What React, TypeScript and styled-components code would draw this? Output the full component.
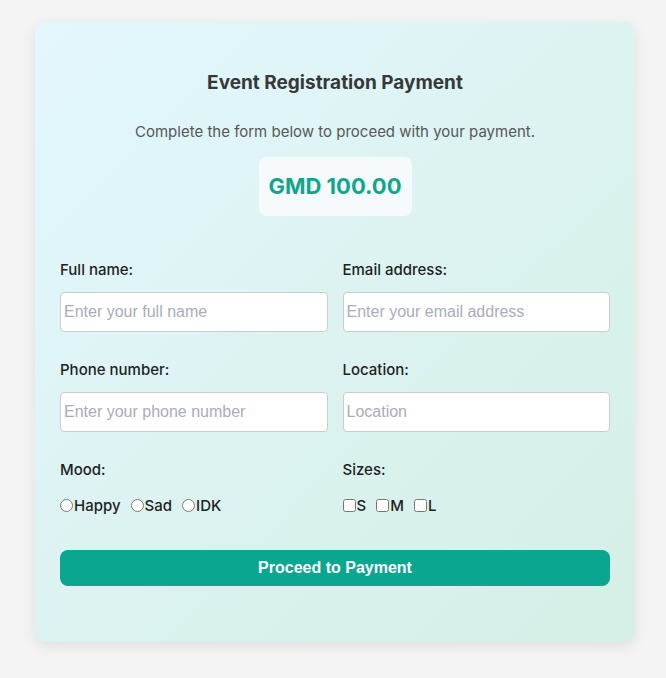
import styled, { createGlobalStyle } from "styled-components";

const GlobalStyle = createGlobalStyle`
  html, body {
    margin: 0;
    padding: 0;
    background: #f4f4f4;
    font-family: Inter, "Noto Sans", sans-serif;
  }
  * {
    box-sizing: border-box;
  }
`;

const Page = styled.div`
  padding: 22px 0 37px 35px;
`;

const Card = styled.div`
  width: 600px;
  padding: 49px 25px 56px;
  border-radius: 10px;
  background: linear-gradient(135deg, #e3f7fd 0%, #d5efe6 100%);
  box-shadow: 0 4px 14px rgba(0, 0, 0, 0.09);
  display: flex;
  flex-direction: column;
  align-items: center;
`;

const Title = styled.h2`
  margin: 0;
  font-size: 19px;
  line-height: 24px;
  font-weight: 700;
  color: #383838;
`;

const Subtitle = styled.p`
  margin: 27px 0 0;
  font-size: 15px;
  line-height: 20px;
  color: #575757;
`;

const Amount = styled.div`
  margin-top: 15px;
  padding: 15px 10px;
  border-radius: 8px;
  background: #f7fafc;
  font-size: 22px;
  line-height: 29px;
  font-weight: 700;
  color: #0fa68b;
`;

const Form = styled.form`
  width: 100%;
  margin-top: 44px;
  display: grid;
  grid-template-columns: 1fr 1fr;
  column-gap: 15px;
  row-gap: 28px;
`;

const Field = styled.div`
  display: flex;
  flex-direction: column;
`;

const Label = styled.label`
  font-size: 15px;
  line-height: 20px;
  font-weight: 500;
  color: #1f1f1f;
  margin-bottom: 12px;
`;

const Input = styled.input`
  height: 40px;
  width: 100%;
  padding: 0 3px;
  border: 1px solid #cbcbcb;
  border-radius: 4px;
  background: #fff;
  font-family: "Liberation Sans", Arial, sans-serif;
  font-size: 16px;
  color: #222;
  outline: none;

  &::placeholder {
    color: #a8adb8;
  }
`;

const Options = styled.div`
  display: flex;
  align-items: center;
  margin-top: 3px;
  height: 20px;
`;

const Option = styled.label`
  display: flex;
  align-items: center;
  margin-right: 10px;
  font-size: 15px;
  font-weight: 500;
  color: #1f1f1f;

  input {
    margin: 0 1px 0 0;
    width: 13px;
    height: 13px;
  }
`;

const SubmitButton = styled.button`
  grid-column: 1 / span 2;
  margin-top: 7px;
  height: 36px;
  border: none;
  border-radius: 8px;
  background: #0aa68f;
  color: #fff;
  font-family: "Liberation Sans", Arial, sans-serif;
  font-size: 16px;
  font-weight: 700;
  cursor: pointer;
`;

const moods = ["Happy", "Sad", "IDK"];
const sizes = ["S", "M", "L"];

export default function App() {
  return (
    <>
      <GlobalStyle />
      <Page>
        <Card>
          <Title>Event Registration Payment</Title>
          <Subtitle>Complete the form below to proceed with your payment.</Subtitle>
          <Amount>GMD 100.00</Amount>
          <Form onSubmit={(e) => e.preventDefault()}>
            <Field>
              <Label>Full name:</Label>
              <Input placeholder="Enter your full name" />
            </Field>
            <Field>
              <Label>Email address:</Label>
              <Input placeholder="Enter your email address" />
            </Field>
            <Field>
              <Label>Phone number:</Label>
              <Input placeholder="Enter your phone number" />
            </Field>
            <Field>
              <Label>Location:</Label>
              <Input placeholder="Location" />
            </Field>
            <Field>
              <Label>Mood:</Label>
              <Options>
                {moods.map((m) => (
                  <Option key={m}>
                    <input type="radio" name="mood" />
                    {m}
                  </Option>
                ))}
              </Options>
            </Field>
            <Field>
              <Label>Sizes:</Label>
              <Options>
                {sizes.map((s) => (
                  <Option key={s}>
                    <input type="checkbox" />
                    {s}
                  </Option>
                ))}
              </Options>
            </Field>
            <SubmitButton type="submit">Proceed to Payment</SubmitButton>
          </Form>
        </Card>
      </Page>
    </>
  );
}
